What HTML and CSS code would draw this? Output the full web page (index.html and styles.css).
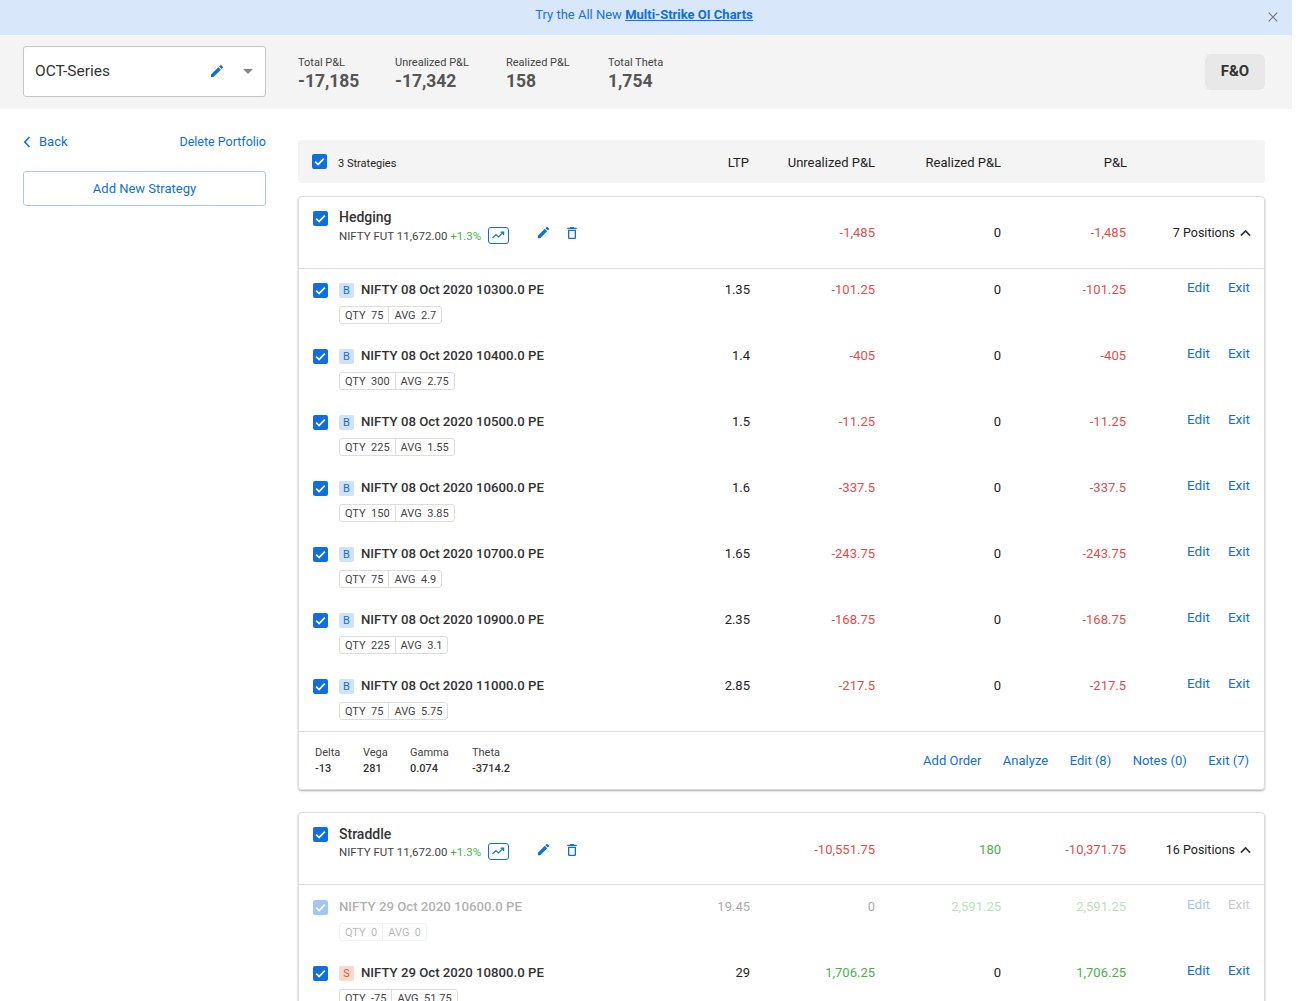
FILE: index.html
```html
<!DOCTYPE html>
<html lang="en">
<head>
<meta charset="utf-8">
<title>OCT-Series</title>
<link rel="stylesheet" href="styles.css">
</head>
<body>
<svg class="defs" aria-hidden="true">
  <symbol id="i-pencil" viewBox="0 0 24 24"><path d="M3 17.25V21h3.75L17.81 9.94l-3.75-3.75L3 17.25zM20.71 7.04a1 1 0 0 0 0-1.41l-2.34-2.34a1 1 0 0 0-1.41 0l-1.83 1.83 3.75 3.75 1.83-1.83z"/></symbol>
  <symbol id="i-trash" viewBox="0 0 24 24"><path d="M6 19c0 1.1.9 2 2 2h8c1.1 0 2-.9 2-2V7H6v12zM8 9h8v10H8V9zm7.5-5l-1-1h-5l-1 1H5v2h14V4z"/></symbol>
  <symbol id="i-check" viewBox="0 0 15 15"><path d="M3.2 7.6l2.9 2.9 5.7-5.9" fill="none" stroke="#fff" stroke-width="1.7"/></symbol>
  <symbol id="i-trend" viewBox="0 0 22 17"><path d="M4 11.5l4-4 3 2.6 5.5-5.2M13.5 4.6h3.4v3.2" fill="none" stroke="currentColor" stroke-width="1.4"/></symbol>
  <symbol id="i-up" viewBox="0 0 12 8"><path d="M1 6.8l5-5 5 5" fill="none" stroke="currentColor" stroke-width="1.8"/></symbol>
  <symbol id="i-close" viewBox="0 0 10 10"><path d="M.7.7l8.6 8.6M9.3.7L.7 9.3" fill="none" stroke="currentColor" stroke-width="1.2"/></symbol>
</svg>
<div class="page">
  <div class="banner">
    <span>Try the All New <a class="banner-link">Multi-Strike OI Charts</a></span>
    <svg class="banner-close"><use href="#i-close"/></svg>
  </div>
  <header class="topbar">
    <div class="portfolio-select">
      <span class="portfolio-name">OCT-Series</span>
      <svg class="icon-pencil-lg"><use href="#i-pencil"/></svg>
      <span class="caret"></span>
    </div>
    <div class="stats">
      <div class="stat stat-a"><div class="stat-label">Total P&amp;L</div><div class="stat-value">-17,185</div></div>
      <div class="stat stat-b"><div class="stat-label">Unrealized P&amp;L</div><div class="stat-value">-17,342</div></div>
      <div class="stat stat-c"><div class="stat-label">Realized P&amp;L</div><div class="stat-value">158</div></div>
      <div class="stat"><div class="stat-label">Total Theta</div><div class="stat-value">1,754</div></div>
    </div>
    <div class="fno">F&amp;O</div>
  </header>
  <div class="content">
    <aside class="sidebar">
      <div class="side-links">
        <a class="back"><svg class="back-icon" viewBox="0 0 8 12"><path d="M6.5 1L1.8 6l4.7 5" fill="none" stroke="currentColor" stroke-width="1.6"/></svg>Back</a>
        <a class="link">Delete Portfolio</a>
      </div>
      <div class="add-strategy">Add New Strategy</div>
    </aside>
    <main class="main">
      <div class="table-head">
        <span class="check"><svg><use href="#i-check"/></svg></span>
        <span class="strategies">3 Strategies</span>
        <span class="col-ltp">LTP</span>
        <span class="col-num">Unrealized P&amp;L</span>
        <span class="col-num">Realized P&amp;L</span>
        <span class="col-num">P&amp;L</span>
        <span class="col-act"></span>
      </div>

      <section class="card">
        <div class="card-head">
          <span class="check"><svg><use href="#i-check"/></svg></span>
          <div class="strategy-info">
            <div class="strategy-name">Hedging</div>
            <div class="strategy-sub">NIFTY FUT 11,672.00 <span class="green">+1.3%</span><span class="chart-btn"><svg><use href="#i-trend"/></svg></span><svg class="icon-pencil"><use href="#i-pencil"/></svg><svg class="icon-trash"><use href="#i-trash"/></svg></div>
          </div>
          <span class="col-num red">-1,485</span>
          <span class="col-num">0</span>
          <span class="col-num red">-1,485</span>
          <span class="positions">7 Positions<svg class="icon-up"><use href="#i-up"/></svg></span>
        </div>

        <div class="row">
          <span class="check"><svg><use href="#i-check"/></svg></span>
          <div class="pos"><div class="pos-title"><span class="side side-b">B</span>NIFTY 08 Oct 2020 10300.0 PE</div><div class="tag"><span>QTY&nbsp; 75</span><span>AVG&nbsp; 2.7</span></div></div>
          <span class="col-ltp">1.35</span><span class="col-num red">-101.25</span><span class="col-num">0</span><span class="col-num red">-101.25</span>
          <span class="col-act"><a>Edit</a><a>Exit</a></span>
        </div>
        <div class="row">
          <span class="check"><svg><use href="#i-check"/></svg></span>
          <div class="pos"><div class="pos-title"><span class="side side-b">B</span>NIFTY 08 Oct 2020 10400.0 PE</div><div class="tag"><span>QTY&nbsp; 300</span><span>AVG&nbsp; 2.75</span></div></div>
          <span class="col-ltp">1.4</span><span class="col-num red">-405</span><span class="col-num">0</span><span class="col-num red">-405</span>
          <span class="col-act"><a>Edit</a><a>Exit</a></span>
        </div>
        <div class="row">
          <span class="check"><svg><use href="#i-check"/></svg></span>
          <div class="pos"><div class="pos-title"><span class="side side-b">B</span>NIFTY 08 Oct 2020 10500.0 PE</div><div class="tag"><span>QTY&nbsp; 225</span><span>AVG&nbsp; 1.55</span></div></div>
          <span class="col-ltp">1.5</span><span class="col-num red">-11.25</span><span class="col-num">0</span><span class="col-num red">-11.25</span>
          <span class="col-act"><a>Edit</a><a>Exit</a></span>
        </div>
        <div class="row">
          <span class="check"><svg><use href="#i-check"/></svg></span>
          <div class="pos"><div class="pos-title"><span class="side side-b">B</span>NIFTY 08 Oct 2020 10600.0 PE</div><div class="tag"><span>QTY&nbsp; 150</span><span>AVG&nbsp; 3.85</span></div></div>
          <span class="col-ltp">1.6</span><span class="col-num red">-337.5</span><span class="col-num">0</span><span class="col-num red">-337.5</span>
          <span class="col-act"><a>Edit</a><a>Exit</a></span>
        </div>
        <div class="row">
          <span class="check"><svg><use href="#i-check"/></svg></span>
          <div class="pos"><div class="pos-title"><span class="side side-b">B</span>NIFTY 08 Oct 2020 10700.0 PE</div><div class="tag"><span>QTY&nbsp; 75</span><span>AVG&nbsp; 4.9</span></div></div>
          <span class="col-ltp">1.65</span><span class="col-num red">-243.75</span><span class="col-num">0</span><span class="col-num red">-243.75</span>
          <span class="col-act"><a>Edit</a><a>Exit</a></span>
        </div>
        <div class="row">
          <span class="check"><svg><use href="#i-check"/></svg></span>
          <div class="pos"><div class="pos-title"><span class="side side-b">B</span>NIFTY 08 Oct 2020 10900.0 PE</div><div class="tag"><span>QTY&nbsp; 225</span><span>AVG&nbsp; 3.1</span></div></div>
          <span class="col-ltp">2.35</span><span class="col-num red">-168.75</span><span class="col-num">0</span><span class="col-num red">-168.75</span>
          <span class="col-act"><a>Edit</a><a>Exit</a></span>
        </div>
        <div class="row">
          <span class="check"><svg><use href="#i-check"/></svg></span>
          <div class="pos"><div class="pos-title"><span class="side side-b">B</span>NIFTY 08 Oct 2020 11000.0 PE</div><div class="tag"><span>QTY&nbsp; 75</span><span>AVG&nbsp; 5.75</span></div></div>
          <span class="col-ltp">2.85</span><span class="col-num red">-217.5</span><span class="col-num">0</span><span class="col-num red">-217.5</span>
          <span class="col-act"><a>Edit</a><a>Exit</a></span>
        </div>

        <div class="card-foot">
          <div class="greeks">
            <div class="greek greek-delta"><div>Delta</div><div class="greek-val">-13</div></div>
            <div class="greek greek-vega"><div>Vega</div><div class="greek-val">281</div></div>
            <div class="greek greek-gamma"><div>Gamma</div><div class="greek-val">0.074</div></div>
            <div class="greek"><div>Theta</div><div class="greek-val">-3714.2</div></div>
          </div>
          <div class="foot-actions"><a>Add Order</a><a>Analyze</a><a>Edit (8)</a><a>Notes (0)</a><a>Exit (7)</a></div>
        </div>
      </section>

      <section class="card">
        <div class="card-head">
          <span class="check"><svg><use href="#i-check"/></svg></span>
          <div class="strategy-info">
            <div class="strategy-name">Straddle</div>
            <div class="strategy-sub">NIFTY FUT 11,672.00 <span class="green">+1.3%</span><span class="chart-btn"><svg><use href="#i-trend"/></svg></span><svg class="icon-pencil"><use href="#i-pencil"/></svg><svg class="icon-trash"><use href="#i-trash"/></svg></div>
          </div>
          <span class="col-num red">-10,551.75</span>
          <span class="col-num green">180</span>
          <span class="col-num red">-10,371.75</span>
          <span class="positions">16 Positions<svg class="icon-up"><use href="#i-up"/></svg></span>
        </div>

        <div class="row row-closed">
          <span class="check"><svg><use href="#i-check"/></svg></span>
          <div class="pos"><div class="pos-title">NIFTY 29 Oct 2020 10600.0 PE</div><div class="tag"><span>QTY&nbsp; 0</span><span>AVG&nbsp; 0</span></div></div>
          <span class="col-ltp">19.45</span><span class="col-num">0</span><span class="col-num green">2,591.25</span><span class="col-num green">2,591.25</span>
          <span class="col-act"><a>Edit</a><a class="exit-muted">Exit</a></span>
        </div>
        <div class="row">
          <span class="check"><svg><use href="#i-check"/></svg></span>
          <div class="pos"><div class="pos-title"><span class="side side-s">S</span>NIFTY 29 Oct 2020 10800.0 PE</div><div class="tag"><span>QTY&nbsp; -75</span><span>AVG&nbsp; 51.75</span></div></div>
          <span class="col-ltp">29</span><span class="col-num green">1,706.25</span><span class="col-num">0</span><span class="col-num green">1,706.25</span>
          <span class="col-act"><a>Edit</a><a>Exit</a></span>
        </div>
      </section>
    </main>
  </div>
</div>
</body>
</html>
```
FILE: styles.css
```css
* { box-sizing: border-box; }
html, body { margin: 0; padding: 0; background: #fff; }
body {
  font-family: Roboto, "Liberation Sans", sans-serif;
  font-size: 13px;
  color: #222;
  overflow: hidden;
}
.defs { width: 0; height: 0; position: absolute; }
.page { width: 1292px; height: 1001px; overflow: hidden; }
a { color: #0f6fe0; cursor: pointer; }

.banner {
  height: 35px;
  background: #d8e7fa;
  display: flex;
  align-items: center;
  justify-content: center;
  color: #1a73e8;
  font-size: 13px;
  padding: 0 4px 7px 0;
  position: relative;
}
.banner-link { font-weight: 700; text-decoration: underline; color: #0f6fe0; }
.banner-close {
  position: absolute;
  right: 14px;
  top: 12px;
  width: 10px;
  height: 10px;
  color: #777;
}

.topbar {
  height: 74px;
  background: #f4f4f4;
  display: flex;
  align-items: center;
  padding: 0 27px 0 23px;
}
.portfolio-select {
  width: 243px;
  height: 51px;
  margin-bottom: 2px;
  border: 1px solid #c6c6c6;
  border-radius: 3px;
  background: #fff;
  display: flex;
  align-items: center;
  padding: 0 12px 0 11px;
  flex: none;
}
.portfolio-name { flex: 1; font-size: 15.5px; color: #333; }
.icon-pencil-lg { width: 16px; height: 16px; fill: #0f6fe0; margin-right: 18px; }
.caret {
  width: 0;
  height: 0;
  border-left: 5px solid transparent;
  border-right: 5px solid transparent;
  border-top: 5px solid #888;
}
.stats { display: flex; flex: 1; margin-left: 32px; padding-top: 5px; }
.stat { color: #555; }
.stat-a { width: 97px; }
.stat-b { width: 111px; }
.stat-c { width: 102px; }
.stat-label { font-size: 11px; line-height: 14px; color: #444; }
.stat-value { font-size: 17.5px; line-height: 24px; margin-top: -1px; font-weight: 700; color: #555; }
.fno {
  width: 60px;
  height: 36px;
  border-radius: 6px;
  background: #e8e8e8;
  display: flex;
  align-items: center;
  justify-content: center;
  font-weight: 700;
  font-size: 15px;
  padding-bottom: 2px;
  color: #333;
}

.content { display: flex; padding: 0 27px 0 23px; }
.sidebar { width: 243px; flex: none; padding-top: 25px; }
.side-links { display: flex; justify-content: space-between; font-size: 13px; line-height: 16px; }
.side-links .link { font-size: 12.5px; }
.back { display: flex; align-items: center; }
.back-icon { width: 8px; height: 12px; margin-right: 8px; }
.add-strategy {
  margin-top: 21px;
  height: 35px;
  border: 1px solid #a9c8ee;
  border-radius: 3px;
  display: flex;
  align-items: center;
  justify-content: center;
  color: #0f6fe0;
  font-size: 13px;
}

.main { flex: 1; margin-left: 32px; padding-top: 31px; }
.table-head {
  display: grid;
  grid-template-columns: 22px 1fr 70px 126px 126px 126px 138px;
  height: 43px;
  background: #f4f4f4;
  border-radius: 3px;
  align-items: center;
  padding-left: 14px;
  font-size: 13px;
  margin-bottom: 13px;
}
.strategies { font-size: 11px; padding-left: 4px; padding-top: 4px; }
.table-head .check { margin-top: -1px; }
.table-head .col-ltp, .table-head .col-num { padding-top: 2px; }
.check {
  width: 15px;
  height: 15px;
  background: #0f6fe0;
  border-radius: 2px;
  display: block;
  flex: none;
}
.check svg { width: 15px; height: 15px; display: block; }

.card {
  border: 1px solid #ddd;
  border-radius: 4px;
  box-shadow: 0 1px 2px rgba(0,0,0,.35);
  margin-bottom: 22px;
}
.card-head {
  display: grid;
  grid-template-columns: 16px 1fr 126px 126px 125px 138px;
  height: 72px;
  border-bottom: 1px solid #ddd;
  padding-left: 14px;
  padding-top: 14px;
}
.strategy-info { padding-left: 10px; margin-top: -1px; }
.strategy-name { font-size: 14px; font-weight: 500; line-height: 14px; color: #333; }
.strategy-sub {
  font-size: 11.5px;
  line-height: 16px;
  margin-top: 3px;
  color: #444;
  display: flex;
  align-items: center;
  white-space: pre;
}
.chart-btn {
  width: 21px;
  height: 17px;
  border: 1px solid #0f6fe0;
  border-radius: 3px;
  margin-left: 7px;
  color: #0f6fe0;
  display: block;
}
.chart-btn svg { width: 19px; height: 15px; display: block; }
.icon-pencil { width: 15px; height: 15px; fill: #0f6fe0; margin-left: 27px; margin-top: -6px; }
.icon-trash { width: 16px; height: 16px; fill: #0f6fe0; margin-left: 13px; margin-top: -6px; }
.card-head .col-num { line-height: 14px; padding-top: 15px; }
.card + .card .card-head .col-num { padding-top: 16px; }
.card + .card .strategy-name { padding-top: 1px; }
.card + .card .strategy-sub { margin-top: 2px; }
.card + .card .icon-pencil, .card + .card .icon-trash { margin-top: -4px; }
.positions {
  display: flex;
  justify-content: flex-end;
  align-items: flex-start;
  font-size: 12.5px;
  line-height: 14px;
  padding-top: 15px;
  padding-right: 13px;
}
.card + .card .positions { padding-top: 16px; }
.icon-up { width: 11px; height: 8px; margin-left: 5px; margin-top: 3px; color: #333; }
.col-num { text-align: right; }
.col-ltp { text-align: right; }
.red { color: #e34d4d; }
.green { color: #4caf50; }

.row {
  display: grid;
  grid-template-columns: 16px 1fr 60px 125px 126px 125px 138px;
  height: 66px;
  padding-left: 14px;
  padding-top: 14px;
  line-height: 14px;
  font-size: 13px;
}
.card + .card .row { padding-top: 15px; }
.pos { padding-left: 10px; white-space: nowrap; }
.pos-title { font-size: 13.2px; font-weight: 500; color: #333; display: flex; align-items: center; height: 14px; }
.side {
  width: 15px;
  height: 15px;
  border-radius: 2px;
  font-size: 11px;
  font-weight: 400;
  margin-right: 7px;
  display: flex;
  align-items: center;
  justify-content: center;
  padding-top: 1px;
}
.side-b { background: #cfe2fa; color: #0f6fe0; }
.side-s { background: #fbd9cf; color: #f4511e; }
.tag {
  display: inline-flex;
  margin-top: 9px;
  height: 18px;
  border: 1px solid #ddd;
  border-radius: 3px;
  font-size: 11px;
  line-height: 18px;
  color: #444;
}
.tag span { height: 16px; padding: 0 5px 0 5px; }
.tag span + span { border-left: 1px solid #ddd; }
.col-act {
  display: flex;
  justify-content: flex-end;
  gap: 18px;
  padding-right: 14px;
  margin-top: -3px;
  font-size: 13.5px;
}
.row-closed > * { opacity: .38; }
.row-closed .exit-muted { color: #777; }

.card-foot {
  border-top: 1px solid #ddd;
  height: 58px;
  display: flex;
  justify-content: space-between;
  align-items: flex-start;
  padding: 13px 15px 0 16px;
}
.greeks { display: flex; font-size: 11px; line-height: 16px; color: #444; }
.greek-delta { width: 48px; }
.greek-vega { width: 47px; }
.greek-gamma { width: 62px; }
.greek-val { font-weight: 500; color: #333; }
.foot-actions { display: flex; gap: 21.5px; font-size: 13px; line-height: 16px; padding-top: 8px; }
```
